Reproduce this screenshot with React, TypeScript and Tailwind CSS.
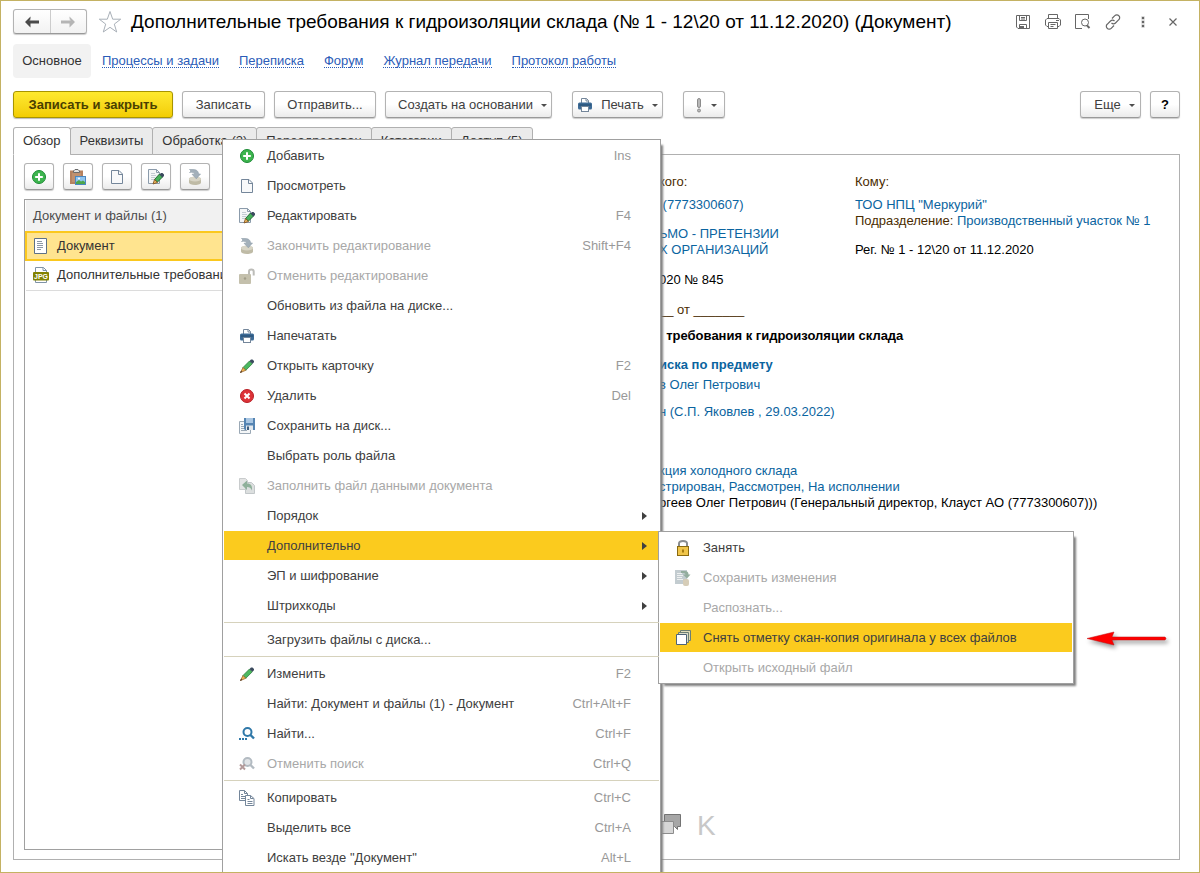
import type { ReactNode } from "react";

interface MenuItem {
    text: string;
    icon?: ReactNode;
    keys?: string;
    disabled?: boolean;
    active?: boolean;
    sub?: MenuItem[];
    arrow?: boolean;
    line?: boolean;
}

function Svg({ children, size = 16 }: { children: ReactNode; size?: number }) {
    return (
        <svg width={size} height={size} viewBox={`0 0 ${size} ${size}`} fill="none" className="shrink-0">
            {children}
        </svg>
    );
}

const AddIcon = () => (
    <Svg>
        <circle cx="8" cy="8" r="6.5" fill="#3db54e" stroke="#1c8a35" />
        <path d="M8 4.2v7.6M4.2 8h7.6" stroke="#fff" strokeWidth="2" />
    </Svg>
);

const PageIcon = () => (
    <Svg>
        <path d="M2.5 1.5h7.5l3.5 3.5v9.5h-11z" fill="#f8f9fa" stroke="#74869a" />
        <path d="M9.5 1.5v4h4" stroke="#74869a" />
    </Svg>
);

const EditIcon = () => (
    <Svg>
        <path d="M.5.5h8l3 3v11H.5z" fill="#f4f6f7" stroke="#8b9bab" />
        <path d="M8.5.5v3h3" stroke="#8b9bab" />
        <path d="M3 4.5h4M3 6.5h5M3 8.5h4M3 10.5h3" stroke="#c3cbd2" />
        <path d="M6.5 10.5l5-5.500 3 3-5 5z" fill="#45b058" stroke="#246b36" />
        <path d="M11.5 5.5L13 4h1.500L16 5.500V7l-1.500 1.500z" fill="#3b4a5e" />
        <path d="M6.5 10.5l3 3L5 15z" fill="#e8b45a" stroke="#7a4b1c" strokeWidth=".8" />
    </Svg>
);

const StampIcon = () => (
    <Svg>
        <path d="M2 10c0-1.500 3-2 6-2s6 .5 6 2v3.500c0 1.500-2.500 2.500-6 2.500s-6-1-6-2.500z" fill="#bfbba6" />
        <ellipse cx="8" cy="10" rx="6" ry="2.500" fill="#d8d5c6" />
        <path d="M2.500 .5h3.500c3.500 0 5.500 1.500 5.500 4.500h2L9.300 9.800 5 5.200h2.500c0-1.700-2-2.200-5-1.700l1.500-1.500z" fill="#a3b0ba" stroke="#8d9ca8" strokeWidth=".6" />
    </Svg>
);

const UnlockIcon = () => (
    <Svg>
        <rect x="0" y="6" width="12" height="10" rx="1" fill="#c4c0ac" />
        <path d="M10 6.5V3.500c0-1.200.8-2 2.300-2s2.400.8 2.400 2v4" stroke="#bcbcb8" strokeWidth="2" />
        <circle cx="6" cy="10.5" r="1.2" fill="#a19d88" />
    </Svg>
);

const PrintIcon = () => (
    <Svg>
        <path d="M4.5 6V1.500h5l2 2V6" fill="#fff" stroke="#74869a" />
        <path d="M9 1.500v2.500h2.500" stroke="#74869a" />
        <rect x="1" y="5.500" width="14" height="7" rx="1.5" fill="#3c6a95" />
        <path d="M2 8h12" stroke="#234a6e" />
        <rect x="4.5" y="9.500" width="7" height="5" fill="#fff" stroke="#74869a" />
    </Svg>
);

const PencilIcon = () => (
    <Svg>
        <path d="M4 9.5L10.5 3l2.800 2.800L6.800 12.300z" fill="#4cb85f" stroke="#2f7d40" strokeWidth=".8" />
        <path d="M10.5 3L12 1.500h1.500l1.500 1.500v1.200L13.300 5.800z" fill="#3b4a5e" />
        <path d="M4 9.5l2.800 2.800L1.500 14.500z" fill="#efb552" stroke="#8a5520" strokeWidth=".7" />
        <path d="M1 15l1-2.300L3.200 14z" fill="#4a3320" />
    </Svg>
);

const DeleteIcon = () => (
    <Svg>
        <circle cx="8" cy="8" r="6.5" fill="#dd3338" stroke="#b81f26" />
        <path d="M5.500 5.500l5 5M10.500 5.500l-5 5" stroke="#fff" strokeWidth="2" />
    </Svg>
);

const SaveDiskIcon = () => (
    <Svg>
        <path d="M.5 3.500h11v12H.5z" fill="#f4f6f7" stroke="#9aa8b5" />
        <path d="M2 6.500h2M2 8.500h3M2 10.500h3M2 12.500h6" stroke="#9aa8b5" />
        <path d="M5 0h11v12H6l-1-1z" fill="#5584b2" />
        <rect x="7" y="0" width="7" height="5" fill="#a9c6e2" />
        <rect x="7" y="7.500" width="7" height="4.500" fill="#e3e8ec" />
        <rect x="8" y="8.500" width="2" height="3.500" fill="#3f5f80" />
    </Svg>
);

const FillIcon = () => (
    <Svg>
        <path d="M.5.5h6l2 2v9h-8z" fill="#e3e4e4" stroke="#c9cccd" />
        <path d="M6.5 4.5h6l3 3v8h-9z" fill="#dcdfdf" stroke="#c2c7c9" />
        <path d="M3 7l5-4.500v3c4 0 5.500 2.500 5 7-1-2.500-2.500-3.500-5-3.500v3z" fill="#8fb09a" />
    </Svg>
);

const FindIcon = () => (
    <Svg>
        <circle cx="8.5" cy="6" r="4" stroke="#2f78a8" strokeWidth="2" />
        <path d="M11.5 9l3.500 3.500" stroke="#2f78a8" strokeWidth="2.400" />
        <path d="M0 13h2M3 13h2M6 13h2" stroke="#2f78a8" strokeWidth="2" />
    </Svg>
);

const FindOffIcon = () => (
    <Svg>
        <circle cx="8.5" cy="6" r="4" fill="#e1e4e7" stroke="#b3bbc2" strokeWidth="2" />
        <path d="M11.5 9l3.500 3.500" stroke="#b3bbc2" strokeWidth="2.400" />
        <path d="M1 8.500l5 5M6 8.500l-5 5" stroke="#b39a9a" strokeWidth="2" />
    </Svg>
);

const CopyIcon = () => (
    <Svg>
        <path d="M.5.5h5l3 3v7h-8z" fill="#fff" stroke="#74869a" />
        <path d="M5.5.5v3h3M2 4.500h2M2 6.500h4M2 8.500h4" stroke="#74869a" />
        <path d="M6.500 5.500h5l3.500 3v7H6.500z" fill="#fff" stroke="#74869a" />
        <path d="M11.500 5.500v3h3M8.500 9.500h2M8.500 11.500h5M8.500 13.500h5" stroke="#74869a" />
    </Svg>
);

const LockIcon = () => (
    <Svg>
        <path d="M4 7V3.500C4 1.500 5.500 1 8 1s4 .5 4 2.500V7" stroke="#8a8d90" strokeWidth="2" />
        <rect x="2.5" y="6.500" width="11" height="9" fill="#f0c54a" stroke="#8a6a10" />
        <rect x="7" y="9.500" width="2" height="3" fill="#a67c12" />
    </Svg>
);

const SaveChangesIcon = () => (
    <Svg>
        <rect x="0" y="0" width="12" height="14" fill="#c3ccd0" />
        <path d="M2 3.500h5M2 5.500h6M2 7.500h5M2 9.500h6" stroke="#eef0f0" />
        <path d="M6 1h4c2.500 0 3.500 1.500 3.500 3.500h2L12 8.500 8 4.500h2.500c0-1.500-1.500-1.500-4.500-1.500z" fill="#93ad9e" />
        <rect x="8" y="9" width="6" height="7" rx="2" fill="#d6cdb8" />
    </Svg>
);

const StackIcon = () => (
    <Svg>
        <path d="M5.500.5h10v10h-10z" fill="#e0dcb8" stroke="#6d7f74" />
        <path d="M3.500 2.500h10v10h-10z" fill="#d9dcc8" stroke="#6d7f74" />
        <path d="M1.500 4.500h10v10h-10z" fill="#fff" stroke="#4d6478" />
    </Svg>
);

const PasteIcon = () => (
    <Svg>
        <path d="M0 1.500h13V15H0z" fill="#b5815f" />
        <path d="M2 4h9v9H2z" fill="#c0906e" />
        <path d="M3.500 3.500V2L5 .5h3L9.500 2v1.500z" fill="#e3e3e3" stroke="#6b6b6b" />
        <rect x="5.500" y="7.500" width="10" height="8" fill="#8fc4f0" stroke="#4a87c0" />
        <path d="M6 15v-2l3-2 2 1.500 2-1 2 1.500v2z" fill="#4ca64c" />
        <circle cx="9" cy="9.500" r="1" fill="#fff" />
    </Svg>
);

const DocIcon = () => (
    <Svg>
        <path d="M1.500.5h12v15h-12z" fill="#fff" stroke="#5e7186" />
        <path d="M4 3.500h5M4 5.500h6M4 7.500h6M4 9.500h6M4 11.500h4" stroke="#8c98a5" />
    </Svg>
);

const JpgIcon = () => (
    <Svg>
        <path d="M2.500 5V.5h8l3 3V5M2.500 13v2.500h11V13" fill="#fff" stroke="#7f93a6" />
        <path d="M10 .5v3h3.500" stroke="#7f93a6" />
        <rect x="0" y="5" width="16" height="8.500" rx="1" fill="#828200" />
        <text x="8" y="12" textAnchor="middle" fontSize="7" fontWeight="bold" fill="#fff" className="font-['Liberation_Sans',sans-serif]">
            JPG
        </text>
    </Svg>
);

const Caret = () => <span className="mt-0.5 border-x-3 border-t-3 border-x-transparent border-t-[#4d4d4d]" />;

const moreItems: MenuItem[] = [
    { text: "Занять", icon: <LockIcon /> },
    { text: "Сохранить изменения", icon: <SaveChangesIcon />, disabled: true },
    { text: "Распознать...", disabled: true },
    { text: "Снять отметку скан-копия оригинала у всех файлов", icon: <StackIcon />, active: true },
    { text: "Открыть исходный файл", disabled: true },
];

const menuItems: MenuItem[] = [
    { text: "Добавить", icon: <AddIcon />, keys: "Ins" },
    { text: "Просмотреть", icon: <PageIcon /> },
    { text: "Редактировать", icon: <EditIcon />, keys: "F4" },
    { text: "Закончить редактирование", icon: <StampIcon />, keys: "Shift+F4", disabled: true },
    { text: "Отменить редактирование", icon: <UnlockIcon />, disabled: true },
    { text: "Обновить из файла на диске..." },
    { text: "Напечатать", icon: <PrintIcon /> },
    { text: "Открыть карточку", icon: <PencilIcon />, keys: "F2" },
    { text: "Удалить", icon: <DeleteIcon />, keys: "Del" },
    { text: "Сохранить на диск...", icon: <SaveDiskIcon /> },
    { text: "Выбрать роль файла" },
    { text: "Заполнить файл данными документа", icon: <FillIcon />, disabled: true },
    { text: "Порядок", arrow: true },
    { text: "Дополнительно", arrow: true, active: true, sub: moreItems },
    { text: "ЭП и шифрование", arrow: true },
    { text: "Штрихкоды", arrow: true },
    { text: "Загрузить файлы с диска...", line: true },
    { text: "Изменить", icon: <PencilIcon />, keys: "F2", line: true },
    { text: "Найти: Документ и файлы (1) - Документ", keys: "Ctrl+Alt+F" },
    { text: "Найти...", icon: <FindIcon />, keys: "Ctrl+F" },
    { text: "Отменить поиск", icon: <FindOffIcon />, keys: "Ctrl+Q", disabled: true },
    { text: "Копировать", icon: <CopyIcon />, keys: "Ctrl+C", line: true },
    { text: "Выделить все", keys: "Ctrl+A" },
    { text: 'Искать везде "Документ"', keys: "Alt+L" },
];

function Menu({ items, className }: { items: MenuItem[]; className: string }) {
    return (
        <ul role="menu" className={`absolute border border-[#a0a0a0] bg-white px-px shadow-[4px_4px_2px_-2px_#808080] ${className}`}>
            {items.map((item, i) => (
                <li key={i} role="none" className="relative">
                    {item.line && <div className="my-0.5 h-px bg-[#d6d2bc]" />}
                    <button
                        role="menuitem"
                        disabled={item.disabled}
                        className={`mt-px flex h-[29px] w-full items-center pr-7 pl-[15px] text-left ${
                            item.active ? "bg-[#fbcb1e]" : ""
                        } ${item.disabled ? "text-[#a8a8a8]" : "text-[#404040]"}`}
                    >
                        <span className="mr-3 w-4">{item.icon}</span>
                        <span className="grow whitespace-nowrap">{item.text}</span>
                        {item.keys && <span className="text-[#999]">{item.keys}</span>}
                        {item.arrow && <span className="-mr-4 border-y-4 border-l-5 border-y-transparent border-l-[#404040]" />}
                    </button>
                    {item.sub && <Menu items={item.sub} className="top-0 left-full -ml-px w-[416px] pb-px" />}
                </li>
            ))}
        </ul>
    );
}

const btn =
    "flex h-[27px] items-center justify-center gap-2 rounded-[3px] border border-[#b3b3b3] border-b-[#999] bg-linear-to-b from-white from-50% to-[#ebebeb] text-[#404040] shadow-[0_1px_1px_#ccc]";

const links = ["Процессы и задачи", "Переписка", "Форум", "Журнал передачи", "Протокол работы"];
const tabs = ["Обзор", "Реквизиты", "Обработка (2)", "Переадресован", "Категории", "Доступ (5)"];

function WindowTools() {
    const cls = "flex h-6 w-[30px] items-center justify-center";
    return (
        <div className="mr-[-8px] flex text-[#666]">
            <button aria-label="Сохранить" className={cls}>
                <Svg>
                    <path d="M1.500 1.500h13v13H3l-1.500-1.500zM4.500 1.500v5h7v-5M6 3.500h4M6 5h4M4.500 14.500v-4h7v4" stroke="currentColor" />
                    <rect x="5" y="12" width="4" height="2.500" fill="currentColor" />
                </Svg>
            </button>
            <button aria-label="Печать" className={cls}>
                <Svg>
                    <path d="M3.500 4.500v-4h9v4M3.500 12.500H2L.5 11V6L2 4.500h12L15.500 6v5L14 12.500h-1.500M3.500 8.500h9v6h-9zM5.500 10.500h5M5.500 12.500h3M11 6.500h3" stroke="currentColor" />
                </Svg>
            </button>
            <button aria-label="Просмотр" className={cls}>
                <Svg>
                    <path d="M7 14.500H.5v-14h13V5" stroke="currentColor" />
                    <circle cx="10" cy="8.500" r="3.500" stroke="currentColor" />
                    <path d="M12 11.500l2.500 2.500" stroke="currentColor" strokeWidth="2" />
                </Svg>
            </button>
            <button aria-label="Ссылка" className={cls}>
                <Svg>
                    <path d="M7 4.500l2.800-2.800a2.700 2.700 0 0 1 4 0 2.700 2.700 0 0 1 0 4L10.500 9a2.700 2.700 0 0 1-4 0M9 11.500l-2.800 2.800a2.700 2.700 0 0 1-4 0 2.700 2.700 0 0 1 0-4L5.500 7a2.700 2.700 0 0 1 4 0" stroke="currentColor" strokeWidth="1.200" />
                </Svg>
            </button>
            <button aria-label="Ещё" className={cls}>
                <Svg>
                    <path d="M6.500 2.500h3v3h-3zM6.500 6.500h3v3h-3zM6.500 10.500h3v3h-3z" fill="currentColor" stroke="#fff" strokeWidth=".5" />
                </Svg>
            </button>
            <button aria-label="Закрыть" className={cls}>
                <Svg>
                    <path d="M4.500 4.500l7 7M11.500 4.500l-7 7" stroke="currentColor" strokeWidth="1.200" />
                </Svg>
            </button>
        </div>
    );
}

function Preview() {
    return (
        <div className="flex grow flex-col justify-between pl-[100px] text-black">
            <div className="flex leading-4">
                <div className="w-[196px] shrink-0 whitespace-nowrap text-[#0a64a0]">
                    <p className="mt-[19px] text-[#4a2c00]">кого:</p>
                    <p className="mt-[7px]">&nbsp;(7773300607)</p>
                    <p className="mt-[13px]">ЬМО - ПРЕТЕНЗИИ</p>
                    <p>Х ОРГАНИЗАЦИЙ</p>
                    <p className="mt-[14px] text-black">020 № 845</p>
                    <p className="mt-[14px] text-[#4a2c00]">__ от _______</p>
                    <p className="mt-[10px] font-bold text-black">&nbsp;&nbsp;требования к гидроизоляции склада</p>
                    <p className="mt-[13px] font-bold">иска по предмету</p>
                    <p className="mt-1">в Олег Петрович</p>
                    <p className="mt-[11px]">н (С.П. Яковлев , 29.03.2022)</p>
                    <p className="mt-[43px]">кция холодного склада</p>
                    <p>стрирован, Рассмотрен, На исполнении</p>
                    <p className="text-black">ргеев Олег Петрович (Генеральный директор, Клауст АО (7773300607)))</p>
                </div>
                <div>
                    <p className="mt-[19px] text-[#4a2c00]">Кому:</p>
                    <p className="mt-[7px] text-[#0a64a0]">ТОО НПЦ "Меркурий"</p>
                    <p className="text-[#4a2c00]">
                        Подразделение: <a href="#" className="text-[#0a64a0]">Производственный участок № 1</a>
                    </p>
                    <p className="mt-[13px]">Рег. № 1 - 12\20 от 11.12.2020</p>
                </div>
            </div>
            <div className="mb-[17px] flex items-center gap-4">
                <svg width="22" height="24" viewBox="1 0 22 24">
                    <path d="M6.500.5h16v12h-3v3l-3-3h-10z" fill="#a6a6a6" stroke="#737373" />
                    <path d="M.5 7.500h15v12h-11l-4 4z" fill="#d6d6d6" stroke="#8c8c8c" />
                </svg>
                <span className="text-[28px] leading-8 text-[#c8c8c8]">K</span>
            </div>
        </div>
    );
}

export default function App() {
    return (
        <div className="relative flex min-h-screen flex-col overflow-hidden border border-[#c4b263] bg-white pr-[19px] pb-3 pl-3 font-['Liberation_Sans',Arial,sans-serif] text-[13px] leading-4">
            <header className="mt-2 flex h-[25px] items-center">
                <div className="flex h-[25px] w-[74px] rounded-[3px] border border-[#b3b3b3] border-b-[#999] bg-linear-to-b from-white to-[#f2f2f2] shadow-[0_1px_1px_#ccc]">
                    <button aria-label="Назад" className="flex grow items-center justify-center border-r border-[#ccc]">
                        <Svg>
                            <path d="M1 8l5.500-5.500v4H15v3H6.500v4z" fill="#4a4a4a" />
                            <path d="M6.500 4l-1 2.500h1z" fill="#fff" />
                        </Svg>
                    </button>
                    <button aria-label="Вперед" className="flex grow items-center justify-center">
                        <Svg>
                            <path d="M15 8L9.500 2.500v4H1v3h8.500v4z" fill="#b5b5b5" />
                            <path d="M9.500 4l1 2.500h-1z" fill="#fff" />
                        </Svg>
                    </button>
                </div>
                <button aria-label="В избранное" className="ml-[11px]">
                    <Svg size={24}>
                        <path d="M12 1.500l2.700 7.700h8l-6.400 4.900 2.400 7.900-6.700-4.700L5.300 22l2.400-7.900-6.400-4.900h8z" stroke="#a9b0b8" />
                    </Svg>
                </button>
                <h1 className="ml-[9px] grow text-[19px] leading-6 whitespace-nowrap text-black">
                    Дополнительные требования к гидроизоляции склада (№ 1 - 12\20 от 11.12.2020) (Документ)
                </h1>
                <WindowTools />
            </header>

            <nav className="mt-2.5 flex h-[34px] items-center gap-5 text-[#2b5cb8]">
                <span className="-mr-[9px] flex h-full w-[78px] items-center justify-center rounded bg-[#f2f2f2] text-[#333]">Основное</span>
                {links.map((link) => (
                    <a key={link} href="#" className="border-b border-dotted border-[#2b5cb8] leading-[13px]">
                        {link}
                    </a>
                ))}
            </nav>

            <div className="mt-[13px] flex gap-[9px]">
                <button className="h-[27px] w-40 rounded-[3px] border border-[#a89400] bg-linear-to-b from-[#ffe92e] to-[#f2cd00] font-bold text-[#4a4000] shadow-[0_1px_1px_#bbb]">
                    Записать и закрыть
                </button>
                <button className={`${btn} w-[83px]`}>Записать</button>
                <button className={`${btn} w-[102px]`}>Отправить...</button>
                <button className={`${btn} w-[167px] pl-2`}>Создать на основании <Caret /></button>
                <button className={`${btn} ml-[11px] w-[91px]`}><PrintIcon />Печать <Caret /></button>
                <button aria-label="Важность" className={`${btn} ml-[11px] w-[42px] pl-1`}>
                    <svg width="8" height="16" viewBox="0 0 8 16">
                        <rect x="2.500" y="1.500" width="3" height="9" rx="1.500" fill="#b8b8b8" stroke="#8c8c8c" />
                        <circle cx="4" cy="13.500" r="1.500" fill="#b8b8b8" stroke="#8c8c8c" />
                    </svg>
                    <Caret />
                </button>
                <button className={`${btn} ml-auto w-[61px] pl-2`}>Еще <Caret /></button>
                <button className={`${btn} w-[30px] font-bold text-black`}>?</button>
            </div>

            <div role="tablist" className="z-10 mt-[9px] -mb-px flex">
                {tabs.map((tab, i) => (
                    <button
                        key={tab}
                        role="tab"
                        aria-selected={i === 0}
                        className={`-mr-px h-7 rounded-t-[3px] border border-[#b0b0b0] px-[9px] text-[#333] ${i === 0 ? "border-b-white bg-white" : "bg-[#ebebeb]"}`}
                    >
                        {tab}
                    </button>
                ))}
            </div>

            <main className="flex grow border border-[#b0b0b0]">
                <section className="flex w-[545px] shrink-0 flex-col pt-2 pb-[9px] pl-2.5">
                    <div className="flex gap-[9px]">
                        <button aria-label="Добавить" className={`${btn} w-[30px]`}><AddIcon /></button>
                        <button aria-label="Вставить" className={`${btn} w-[30px]`}><PasteIcon /></button>
                        <button aria-label="Просмотреть" className={`${btn} w-[30px]`}><PageIcon /></button>
                        <button aria-label="Редактировать" className={`${btn} w-[30px]`}><EditIcon /></button>
                        <button aria-label="Закончить редактирование" disabled className={`${btn} w-[30px]`}><StampIcon /></button>
                    </div>
                    <div className="mt-[9px] grow border border-[#a0a0a0]">
                        <table className="w-full text-left">
                            <thead>
                                <tr className="h-8 border-b border-[#d6d6d6] bg-[#f1f1f1] text-[#4d4d4d]">
                                    <th className="px-[7px] font-normal">Документ и файлы (1)</th>
                                </tr>
                            </thead>
                            <tbody className="text-[#333]">
                                <tr className="h-7">
                                    <td className="border-2 border-[#fbc81e] bg-[#ffe48f] px-1.5">
                                        <div className="flex items-center gap-2"><DocIcon />Документ</div>
                                    </td>
                                </tr>
                                <tr className="h-[30px] border-b border-[#dcdcdc]">
                                    <td className="px-[7px]">
                                        <div className="flex items-center gap-2"><JpgIcon />Дополнительные требовани</div>
                                    </td>
                                </tr>
                            </tbody>
                        </table>
                    </div>
                </section>
                <Preview />
            </main>

            <Menu items={menuItems} className="top-[138px] left-[221px] z-20 w-[439px] pb-6" />

            {/* red pointer to the highlighted command */}
            <svg width="90" height="28" viewBox="0 0 90 28" className="absolute top-[625px] left-[1083px] z-30 drop-shadow-[2px_3px_2px_#999]">
                <path d="M3 12.500L30 6l-2 5h53q2 1.500 0 3H28l2 5z" fill="#ff0000" stroke="#c01010" strokeWidth=".5" />
            </svg>
        </div>
    );
}
